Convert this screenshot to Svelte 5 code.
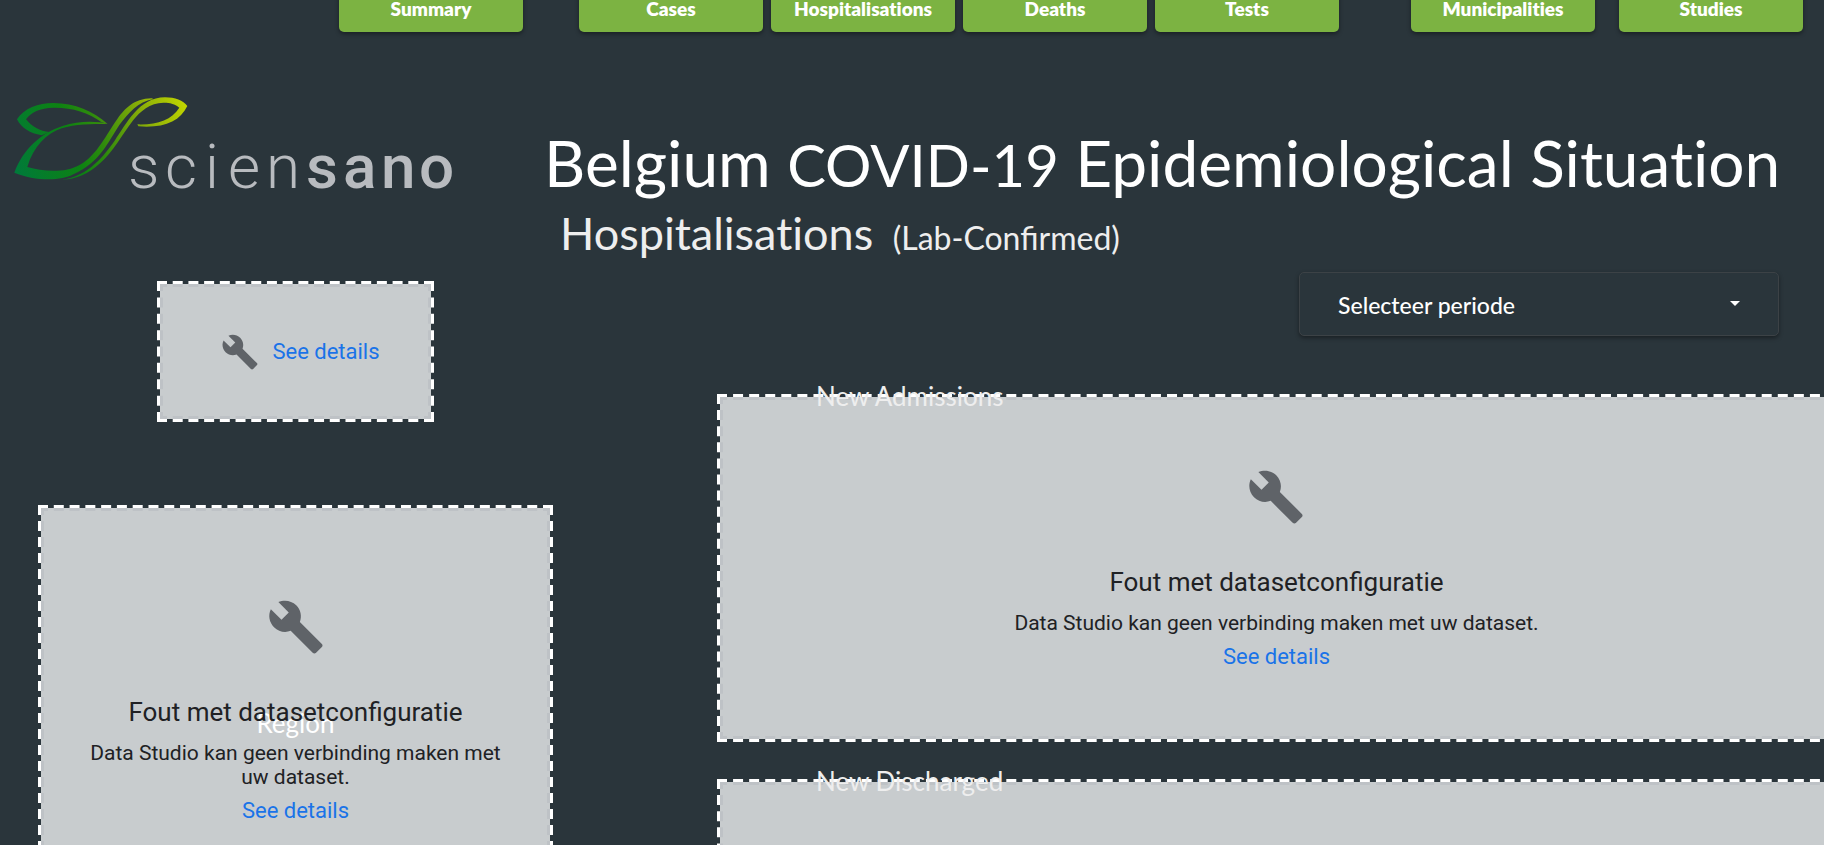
<script>
    const navGroups = [
        ['Summary'],
        ['Cases', 'Hospitalisations', 'Deaths', 'Tests'],
        ['Municipalities'],
        ['Studies']
    ];

    let sizes = $state({
        total: { w: 0, h: 0 },
        region: { w: 0, h: 0 },
        admissions: { w: 0, h: 0 },
        discharged: { w: 0, h: 0 }
    });

    const dash = 10;

    // stretch the gaps so that each side starts and ends with a full dash
    function dashes(length) {
        const count = Math.max(1, Math.round((length - dash) / 16));
        return `${dash} ${(length - dash) / count - dash}`;
    }
</script>

{#snippet wrench()}
    <svg class="wrench" viewBox="0 0 24 24" aria-hidden="true">
        <path d="M22.7 19l-9.1-9.1c.9-2.3.4-5-1.5-6.9-2-2-5-2.4-7.4-1.3L9 6 6 9 1.6 4.7C.4 7.1.9 10.1 2.9 12.1c1.9 1.9 4.6 2.4 6.9 1.5l9.1 9.1c.4.4 1 .4 1.4 0l2.3-2.3c.5-.4.5-1.1.1-1.4z" />
    </svg>
{/snippet}

{#snippet frame({ w, h })}
    <svg class="frame" aria-hidden="true">
        {#each [['inner', 4.5, 3], ['outer', 1.5, 3]] as [name, inset, width]}
            <g class={name} stroke-width={width}>
                <g stroke-dasharray={dashes(w)}>
                    <line x1="0" y1={inset} x2={w} y2={inset} />
                    <line x1="0" y1={h - inset} x2={w} y2={h - inset} />
                </g>
                <g stroke-dasharray={dashes(h)}>
                    <line x1={inset} y1="0" x2={inset} y2={h} />
                    <line x1={w - inset} y1="0" x2={w - inset} y2={h} />
                </g>
            </g>
        {/each}
    </svg>
{/snippet}

{#snippet error()}
    <div class="error">
        {@render wrench()}
        <h3>Fout met datasetconfiguratie</h3>
        <p>Data Studio kan geen verbinding maken met uw dataset.</p>
        <a href="#details">See details</a>
    </div>
{/snippet}

<div class="page">
    <nav>
        {#each navGroups as group}
            <div class="nav-group">
                {#each group as item}
                    <a href="#{item.toLowerCase()}">{item}</a>
                {/each}
            </div>
        {/each}
    </nav>

    <header>
        <svg class="logo" viewBox="0 0 480 110" role="img" aria-label="sciensano">
            <defs>
                <linearGradient id="leaf" gradientUnits="userSpaceOnUse" x1="44" y1="270" x2="560" y2="80">
                    <stop offset="0" stop-color="#007a3a" />
                    <stop offset="0.35" stop-color="#0d8212" />
                    <stop offset="0.5" stop-color="#2e8b0c" />
                    <stop offset="0.75" stop-color="#86ac08" />
                    <stop offset="1" stop-color="#c0d400" />
                </linearGradient>
            </defs>
            <g fill="url(#leaf)" transform="scale(0.3333)">
                <path d="M51 118C72 85 115 69 160 69C225 69 280 95 322 131L305 127C265 97 215 82 160 83C120 84 92 97 78 118C95 140 120 154 148 156L125 166C90 160 65 145 51 118Z" />
                <path d="M322 131C290 123 235 122 190 137C125 158 70 205 43 278C100 302 180 305 220 283C300 248 325 185 358 135C386 98 413 66 460 57L455 55C400 56 374 88 354 114C321 160 290 228 240 254C195 280 130 275 82 261C100 200 140 160 185 145C225 132 275 132 322 132Z" />
                <path d="M185 299C265 290 314 224 344 182C379 132 417 52 495 52C525 52 550 62 562 78C540 125 490 145 415 139L412 133C470 135 515 120 538 83C520 68 500 68 490 68C450 68 420 95 400 120C365 165 340 215 300 250C265 282 230 298 185 299Z" />
            </g>
            <text class="light" y="108" x="128 165 205 228 266">scien</text>
            <text class="heavy" y="108" x="306 343 381 419">sano</text>
        </svg>
        <div class="headings">
            <h1>Belgium <small>COVID-19</small> Epidemiological Situation</h1>
            <h2>Hospitalisations <small>(Lab-Confirmed)</small></h2>
        </div>
    </header>

    <main>
        <div class="side">
            <section class="panel total" bind:clientWidth={sizes.total.w} bind:clientHeight={sizes.total.h}>
                {@render frame(sizes.total)}
                {@render wrench()}
                <a href="#details">See details</a>
            </section>
            <section class="panel region" bind:clientWidth={sizes.region.w} bind:clientHeight={sizes.region.h}>
                {@render frame(sizes.region)}
                <h4 class="region-label">Region</h4>
                {@render error()}
            </section>
        </div>

        <div class="charts">
            <div class="period">
                <select aria-label="Selecteer periode">
                    <option>Selecteer periode</option>
                </select>
                <svg viewBox="0 0 10 5" aria-hidden="true"><path d="M0 0h10L5 5z" /></svg>
            </div>
            <section class="panel chart" bind:clientWidth={sizes.admissions.w} bind:clientHeight={sizes.admissions.h}>
                {@render frame(sizes.admissions)}
                <h4 class="chart-label">New Admissions</h4>
                {@render error()}
            </section>
            <section class="panel chart" bind:clientWidth={sizes.discharged.w} bind:clientHeight={sizes.discharged.h}>
                {@render frame(sizes.discharged)}
                <h4 class="chart-label">New Discharged</h4>
                {@render error()}
            </section>
        </div>
    </main>
</div>

<style>
:global(html) {
    overflow: hidden;
}
:global(body) {
    margin: 0;
    background: #2a353b;
}
.page {
    box-sizing: border-box;
    height: 100vh;
    overflow: hidden;
    font-family: Lato, sans-serif;
    color: #fff;
}
h1, h2, h3, h4, p {
    margin: 0;
    font-weight: 400;
}

nav {
    display: flex;
    justify-content: flex-end;
    margin-top: -14px;
    padding-right: 21px;
}
.nav-group {
    display: flex;
    gap: 8px;
}
.nav-group:nth-child(2) {
    margin: 0 72px 0 56px;
}
.nav-group:last-child {
    margin-left: 24px;
}
nav a {
    width: 184px;
    height: 46px;
    border-radius: 5px;
    background: #7cb342;
    box-shadow: 0 2px 4px rgba(0, 0, 0, 0.4);
    color: #fff;
    font-size: 19px;
    font-variant-ligatures: none;
    font-weight: 800;
    line-height: 46px;
    text-align: center;
    text-decoration: none;
}

header {
    display: flex;
    padding-top: 48px;
}
.logo {
    flex: none;
    width: 480px;
    height: 110px;
}
.logo text {
    fill: #b8bbbf;
    font-family: Roboto, sans-serif;
    font-size: 62px;
}
.logo .light {
    font-weight: 300;
}
.logo .heavy {
    font-weight: 500;
}
.headings {
    padding: 45px 0 0 64px;
    white-space: nowrap;
}
h1, h2 {
    font-variant-ligatures: none;
}
h1 {
    font-size: 64px;
    line-height: 76px;
}
h1 small {
    font-size: 58px;
}
h2 {
    padding-left: 16px;
    color: #eee;
    font-size: 45px;
    line-height: 60px;
}
h2 small {
    margin-left: 8px;
    font-size: 32px;
    font-variant-ligatures: normal;
}

main {
    display: flex;
    justify-content: space-between;
    margin-right: -12px;
}
.side {
    display: flex;
    flex-direction: column;
    align-items: center;
    gap: 83px;
    width: 515px;
    margin-left: 38px;
    padding-top: 13px;
}
.charts {
    display: flex;
    flex-direction: column;
    flex: 1;
    margin-left: 164px;
    padding-top: 4px;
}

.panel {
    position: relative;
    display: flex;
    align-items: center;
    justify-content: center;
    box-sizing: border-box;
    padding: 3px;
    background: linear-gradient(#c8ccce, #c8ccce) content-box;
    font-family: Roboto, sans-serif;
}
.frame {
    position: absolute;
    inset: 0;
    width: 100%;
    height: 100%;
}
.outer {
    stroke: #fff;
}
.inner {
    stroke: #bec2c6;
}
.wrench {
    position: relative;
    flex: none;
    width: 58px;
    height: 58px;
    fill: #5f6368;
}
.panel a {
    position: relative;
    color: #1a73e8;
    font-size: 22px;
    line-height: 24px;
    text-decoration: none;
}

.total {
    gap: 13px;
    width: 277px;
    height: 141px;
}
.total .wrench {
    width: 38px;
    height: 38px;
    margin-left: 10px;
}
.region {
    width: 100%;
    height: 410px;
}
.chart {
    height: 348px;
    margin-bottom: 37px;
}

.error {
    position: relative;
    display: flex;
    flex-direction: column;
    align-items: center;
    padding: 0 48px;
    color: #202124;
    text-align: center;
}
.error h3 {
    margin-top: 40px;
    font-size: 26px;
    line-height: 32px;
}
.error p {
    margin: 13px 0 10px;
    font-size: 21px;
    line-height: 24px;
}

h4 {
    position: absolute;
    font-family: Lato, sans-serif;
    font-size: 26px;
    line-height: 32px;
}
.region-label {
    top: 202px;
}
.chart-label {
    top: -14px;
    left: 99px;
    color: #eee;
}

.period {
    position: relative;
    align-self: flex-end;
    width: 480px;
    margin: 0 57px 58px 0;
}
select {
    display: block;
    width: 100%;
    height: 64px;
    padding: 2px 38px 0;
    border: 1px solid #3c4246;
    border-radius: 5px;
    appearance: none;
    background: #2a353b;
    box-shadow: 0 2px 4px rgba(0, 0, 0, 0.4);
    color: #fff;
    font-family: Lato, sans-serif;
    font-size: 23px;
    font-weight: 500;
}
.period svg {
    position: absolute;
    top: 29px;
    right: 39px;
    width: 10px;
    fill: #fff;
    pointer-events: none;
}
</style>
